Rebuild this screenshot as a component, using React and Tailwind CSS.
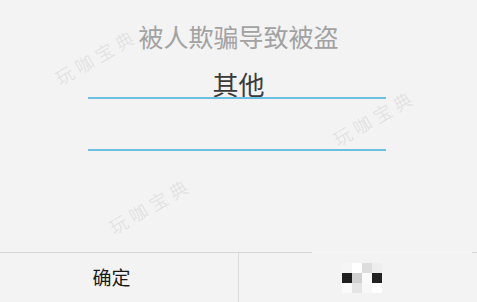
import React from 'react';

const cjk = { fontFamily: '"Noto Sans CJK SC", "Noto Sans", sans-serif' };

// mosaic cells of the blurred button label, row by row
const mosaico = [
  '#f5f5f5', '#ffffff', '#dddddd', '#eeeeee',
  '#1e1e1e', '#d0d0d0', '#fafafa', '#222222',
  '#fafafa', '#e5e5e5', '#f8f8f8', '#ffffff',
];

const MarcaDagua = ({ className }) => (
  <div
    className={`absolute text-[18px] leading-none tracking-[5px] font-light text-[#dedede] -rotate-[30deg] select-none pointer-events-none ${className}`}
    style={cjk}
  >
    玩咖宝典
  </div>
);

const App = () => {
  return (
    <div className="relative w-[477px] h-[302px] bg-[#f3f3f3] flex flex-col overflow-hidden" style={cjk}>
      {/* Conteúdo */}
      <div className="flex-1 flex flex-col">
        <div className="mt-[24px] text-center text-[25px] leading-[25px] text-[#a2a2a2]">
          被人欺骗导致被盗
        </div>
        <div className="mt-[22px] text-center text-[26px] leading-[26px] text-[#3a3a3a]">
          其他
        </div>
        <div className="ml-[88px] w-[298px] h-[2px] bg-[#6bbfe0]"></div>
        <div className="ml-[88px] mt-[50px] w-[298px] h-[2px] bg-[#6bbfe0]"></div>
      </div>

      {/* Botões */}
      <div className="h-[50px] flex flex-col">
        <div className="flex h-px">
          <div className="w-[312px] bg-[#d6d6d6]"></div>
          <div className="flex-1 bg-[#f6f6f6]"></div>
          <div className="w-[5px] bg-[#d6d6d6]"></div>
        </div>
        <div className="flex-1 flex">
          <div className="w-[238px] flex items-center justify-center pr-[15px] text-[19px] text-[#1a1a1a]">
            确定
          </div>
          <div className="w-px bg-[#dcdcdc]"></div>
          <div className="flex-1 flex items-center justify-center pl-[8px]">
            <div className="grid grid-cols-4 w-[40px] h-[30px]">
              {mosaico.map((cor, i) => (
                <div key={i} style={{ backgroundColor: cor }}></div>
              ))}
            </div>
          </div>
        </div>
      </div>

      <MarcaDagua className="left-[50px] top-[47px]" />
      <MarcaDagua className="left-[328px] top-[108px]" />
      <MarcaDagua className="left-[104px] top-[196px]" />
    </div>
  );
};

export default App;
